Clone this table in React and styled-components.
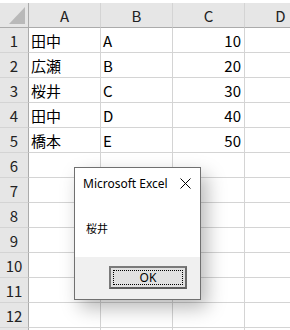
import React from 'react';
import styled, { createGlobalStyle } from 'styled-components';

const GlobalStyle = createGlobalStyle`
  html, body {
    margin: 0;
    padding: 0;
    background: #ffffff;
  }
  body {
    font-family: "Noto Sans CJK JP", "Noto Sans", sans-serif;
    overflow: hidden;
  }
`;

const Page = styled.div`
  position: relative;
  width: 290px;
  height: 330px;
  padding-top: 3px;
  box-sizing: border-box;
  overflow: hidden;
`;

const Grid = styled.div`
  display: grid;
  grid-template-columns: 29px 72px 72px 72px 72px;
  grid-auto-rows: 25px;
`;

const Corner = styled.div`
  position: relative;
  background: #e6e6e6;
  border-right: 1px solid #ababab;
  border-bottom: 1px solid #ababab;
  box-sizing: border-box;
`;

const CornerMark = styled.svg`
  position: absolute;
  right: 3px;
  bottom: 3px;
`;

const ColHead = styled.div`
  background: #e6e6e6;
  border-right: 1px solid #d4d4d4;
  border-bottom: 1px solid #ababab;
  box-sizing: border-box;
  display: flex;
  align-items: center;
  justify-content: center;
  font-size: 15px;
  color: #222;
`;

const RowHead = styled.div`
  background: #e6e6e6;
  border-right: 1px solid #ababab;
  border-bottom: 1px solid #d4d4d4;
  box-sizing: border-box;
  display: flex;
  align-items: center;
  justify-content: center;
  font-size: 15px;
  color: #222;
`;

const Cell = styled.div`
  border-right: 1px solid #d4d4d4;
  border-bottom: 1px solid #d4d4d4;
  box-sizing: border-box;
  display: flex;
  align-items: center;
  justify-content: ${(p) => (p.$num ? 'flex-end' : 'flex-start')};
  padding: 0 3px 0 2px;
  font-size: 15px;
  color: #000;
  white-space: nowrap;
`;

const Dialog = styled.div`
  position: absolute;
  left: 74px;
  top: 167px;
  width: 127px;
  height: 133px;
  box-sizing: border-box;
  border: 1px solid #707070;
  background: #ffffff;
  display: flex;
  flex-direction: column;
  box-shadow: 6px 8px 18px rgba(0, 0, 0, 0.28);
  font-family: "Noto Sans", "Noto Sans CJK JP", sans-serif;
`;

const TitleBar = styled.div`
  height: 30px;
  display: flex;
  align-items: center;
  justify-content: space-between;
  padding: 0 9px 0 8px;
  font-size: 12px;
  color: #000;
`;

const Message = styled.div`
  flex: 1;
  display: flex;
  align-items: center;
  padding-left: 11px;
  font-family: "Noto Sans CJK JP", sans-serif;
  font-size: 11px;
  color: #000;
`;

const Footer = styled.div`
  height: 42px;
  background: #f0f0f0;
  display: flex;
  align-items: center;
  justify-content: flex-end;
  padding-right: 13px;
`;

const OkButton = styled.button`
  width: 78px;
  height: 23px;
  padding: 0;
  margin-top: -2px;
  box-sizing: border-box;
  border: 2px solid #7a7a7a;
  border-bottom-color: #5e5e5e;
  border-right-color: #6a6a6a;
  background: #e1e1e1;
  display: flex;
  align-items: center;
  justify-content: center;
  font-family: "Noto Sans", sans-serif;
  font-size: 12px;
  color: #000;
`;

const Focus = styled.span`
  flex: 1;
  align-self: stretch;
  margin: 2px;
  border: 1px dotted #000;
  display: flex;
  align-items: center;
  justify-content: center;
`;

const rows = [
  ['田中', 'A', 10],
  ['広瀬', 'B', 20],
  ['桜井', 'C', 30],
  ['田中', 'D', 40],
  ['橋本', 'E', 50],
];

// 12 numbered rows, plus the top edge of the next one
const ROW_COUNT = 12;

const App = () => {
  const lines = Array.from({ length: ROW_COUNT + 1 }, (_, i) => rows[i] || ['', '', '']);

  return (
    <>
      <GlobalStyle />
      <Page>
        <Grid>
          <Corner>
            <CornerMark width="16" height="17" viewBox="0 0 16 17">
              <polygon points="16,0 16,17 0,17" fill="#b9b9b9" />
            </CornerMark>
          </Corner>
          {['A', 'B', 'C', 'D'].map((c) => (
            <ColHead key={c}>{c}</ColHead>
          ))}
          {lines.map((r, i) => (
            <React.Fragment key={i}>
              <RowHead>{i < ROW_COUNT ? i + 1 : ''}</RowHead>
              <Cell>{r[0]}</Cell>
              <Cell>{r[1]}</Cell>
              <Cell $num>{r[2]}</Cell>
              <Cell />
            </React.Fragment>
          ))}
        </Grid>

        <Dialog>
          <TitleBar>
            <span>Microsoft Excel</span>
            <svg width="11" height="11" viewBox="0 0 11 11">
              <path d="M0.5 0.5 L10.5 10.5 M10.5 0.5 L0.5 10.5" stroke="#000" strokeWidth="1" />
            </svg>
          </TitleBar>
          <Message>桜井</Message>
          <Footer>
            <OkButton>
              <Focus>OK</Focus>
            </OkButton>
          </Footer>
        </Dialog>
      </Page>
    </>
  );
};

export default App;
